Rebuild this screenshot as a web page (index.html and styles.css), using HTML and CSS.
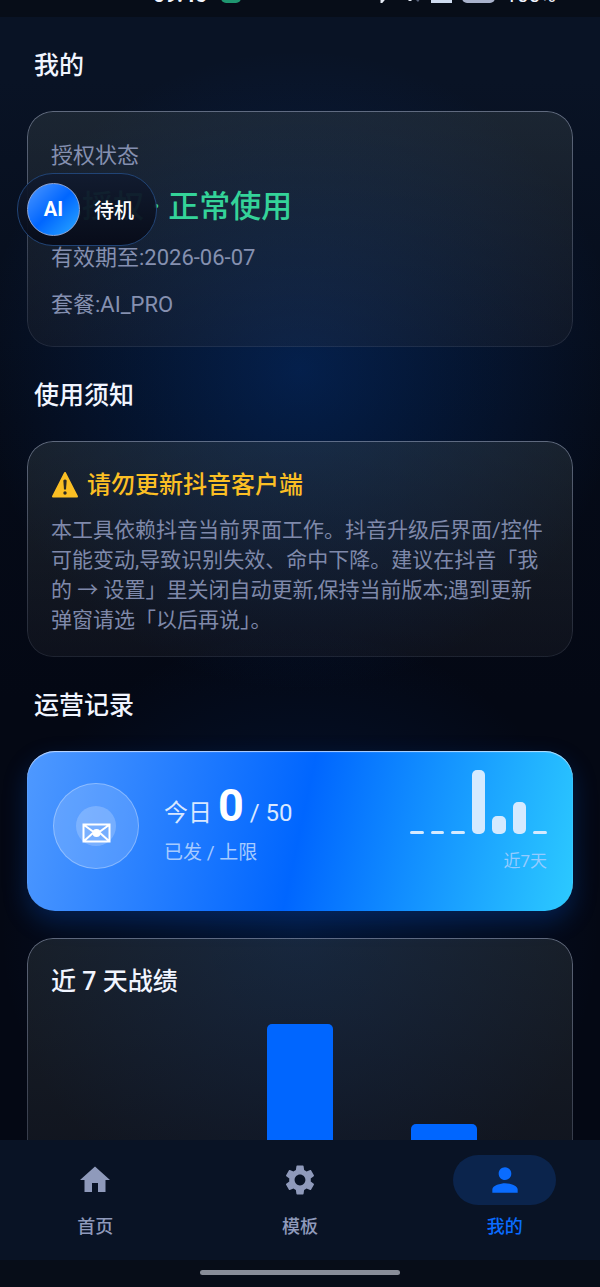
FILE: index.html
```html
<!DOCTYPE html>
<html lang="zh-CN">
<head>
  <meta charset="UTF-8" />
  <meta name="viewport" content="width=device-width, initial-scale=1.0"/>
  <title>我的</title>
  <link rel="stylesheet" href="styles.css">
</head>
<body>
  <div class="status-bar">
    <span class="clock">09:46</span>
    <span class="app-dot"></span>
    <span class="status-icons">
      <svg width="66" height="22" viewBox="0 0 66 22">
        <path d="M27 2v18l7-8-7-5M55 2v18" fill="none" stroke="#e6ebf5" stroke-width="3"/>
        <path d="M59 17h7l-3 4z" fill="#59627a"/>
      </svg>
      <span class="sim"></span>
      <span class="battery"></span>
      <span class="percent">100%</span>
    </span>
  </div>

  <main class="content">
    <h1 class="section-title">我的</h1>
    <section class="card license">
      <p>授权状态</p>
      <p class="license-state">已授权 · 正常使用</p>
      <p>有效期至:2026-06-07</p>
      <p>套餐:AI_PRO</p>
      <button class="float-ball" type="button">
        <span class="ball">AI</span>
        <span>待机</span>
      </button>
    </section>

    <h2 class="section-title">使用须知</h2>
    <section class="card notice">
      <h3 class="notice-title">
        <svg width="28" height="28" viewBox="0 0 28 28">
          <path d="M14 2 26 25.500H2z" fill="#fbbf24" stroke="#fbbf24" stroke-width="2" stroke-linejoin="round"/>
          <path d="M12.300 9.500q1.700-2 3.400 0l-.7 9h-2z" fill="#2b2a26"/>
          <circle cx="14" cy="22" r="1.700" fill="#2b2a26"/>
        </svg>
        请勿更新抖音客户端
      </h3>
      <p class="notice-text">本工具依赖抖音当前界面工作。抖音升级后界面/控件可能变动,导致识别失效、命中下降。建议在抖音「我的 → 设置」里关闭自动更新,保持当前版本;遇到更新弹窗请选「以后再说」。</p>
    </section>

    <h2 class="section-title">运营记录</h2>
    <section class="today">
      <div class="mail">
        <svg width="84" height="84" viewBox="0 0 84 84">
          <circle cx="42" cy="42" r="20" fill="#fff" fill-opacity=".2"/>
          <path d="M29.500 40.500h26v17h-26zM30 41l12.500 9L55 41M30 57l9-8M55 57l-9-8" fill="none" stroke="#fff" stroke-width="2"/>
          <circle cx="42.500" cy="49" r="4" fill="#fff"/>
        </svg>
      </div>
      <div class="today-info">
        <p class="today-count">今日 <strong>0</strong> / 50</p>
        <p class="today-label">已发 / 上限</p>
      </div>
      <div class="trend">
        <div class="trend-bars" id="trendBars"></div>
        <p>近7天</p>
      </div>
    </section>

    <section class="card week">
      <h3 class="week-title">近 7 天战绩</h3>
      <div class="week-bars" id="weekBars"></div>
    </section>
  </main>

  <nav class="tab-bar">
    <a class="tab" href="#home">
      <span class="tab-icon"><svg width="36" height="36" viewBox="0 0 24 24"><path d="M10 20v-6h4v6h5v-8h3L12 3 2 12h3v8z"/></svg></span>
      首页
    </a>
    <a class="tab" href="#template">
      <span class="tab-icon"><svg width="36" height="36" viewBox="0 0 24 24"><path d="M19.140 12.940c.04-.3.060-.61.060-.94 0-.32-.02-.64-.07-.94l2.030-1.580c.18-.14.230-.41.120-.61l-1.920-3.320c-.12-.22-.37-.29-.59-.22l-2.390.96c-.5-.38-1.030-.7-1.620-.94l-.36-2.540c-.04-.24-.24-.41-.48-.41h-3.840c-.24 0-.43.17-.47.41l-.36 2.540c-.59.24-1.130.57-1.620.94l-2.390-.96c-.22-.08-.47 0-.59.22L2.740 8.870c-.12.21-.08.470.12.610l2.030 1.580c-.05.3-.09.630-.09.940s.02.640.07.940l-2.030 1.580c-.18.14-.23.410-.12.610l1.920 3.320c.12.220.37.290.59.220l2.390-.96c.5.380 1.030.7 1.620.94l.36 2.540c.05.240.240.410.480.410h3.840c.24 0 .44-.17.470-.41l.36-2.540c.59-.24 1.130-.56 1.620-.94l2.390.96c.22.080.47 0 .59-.22l1.920-3.320c.12-.22.070-.47-.12-.61zM12 15.600c-1.980 0-3.600-1.620-3.600-3.600s1.620-3.600 3.600-3.600 3.600 1.620 3.600 3.600-1.620 3.600-3.600 3.600z"/></svg></span>
      模板
    </a>
    <a class="tab active" href="#mine">
      <span class="tab-icon"><svg width="38" height="38" viewBox="0 0 24 24"><path d="M12 12c2.210 0 4-1.790 4-4s-1.790-4-4-4-4 1.790-4 4 1.790 4 4 4zm0 2c-2.670 0-8 1.340-8 4v2h16v-2c0-2.660-5.330-4-8-4z"/></svg></span>
      我的
    </a>
  </nav>
  <div class="gesture-bar"><span></span></div>

  <script>
    // share of the best day, oldest first
    const days = [0, 0, 0, 100, 28, 50, 0];

    function drawBars(id) {
      const box = document.getElementById(id);
      days.forEach(value => {
        const bar = document.createElement('span');
        bar.style.height = value + '%';
        box.appendChild(bar);
      });
    }

    drawBars('trendBars');
    drawBars('weekBars');
  </script>
</body>
</html>
```
FILE: styles.css
```css
* {
  box-sizing: border-box;
}
body {
  margin: 0;
  height: 100vh;
  display: flex;
  flex-direction: column;
  overflow: hidden;
  font-family: Roboto, "Noto Sans CJK SC", sans-serif;
  color: #f1f5ff;
  background:
    radial-gradient(circle 320px at 50% 370px, rgba(0, 82, 204, 0.28), rgba(0, 82, 204, 0.12) 55%, transparent),
    radial-gradient(circle 300px at 50% 930px, rgba(0, 82, 204, 0.18), transparent),
    linear-gradient(#091325 80px, #050b18 420px, #040814 700px, #040814);
}
h1, h2, h3, p {
  margin: 0;
  font-weight: 500;
}
.status-bar {
  flex: none;
  height: 17px;
  display: flex;
  align-items: flex-end;
  padding: 0 44px 14px 153px;
  overflow: hidden;
  background: #070d18;
  font-size: 21px;
  line-height: 16px;
}
.clock {
  font-weight: 700;
}
.app-dot {
  width: 20px;
  height: 20px;
  margin-left: 14px;
  border-radius: 5px;
  background: #1f9670;
}
.status-icons {
  display: flex;
  align-items: flex-end;
  gap: 10px;
  margin-left: auto;
}
.sim {
  width: 21px;
  height: 20px;
  background: #cfdcf0;
}
.battery {
  width: 33px;
  height: 20px;
  border-radius: 5px;
  background: #a9b2cc;
}
.content {
  flex: 1;
  min-height: 0;
  overflow: hidden;
  padding: 0 27px;
}
.section-title {
  margin: 33px 7px 29px;
  font-size: 25px;
  line-height: 32px;
}
.card {
  position: relative;
  padding: 28px 24px 27px;
  border-radius: 26px;
  background: linear-gradient(rgba(70, 82, 84, 0.3), rgba(52, 52, 58, 0.2));
}
.card::before {
  content: "";
  position: absolute;
  inset: 0;
  padding: 1px;
  border-radius: 26px;
  background: linear-gradient(rgba(200, 210, 240, 0.4), rgba(180, 195, 230, 0.1));
  mask: linear-gradient(#000 0 0) content-box exclude, linear-gradient(#000 0 0);
  pointer-events: none;
}
.license {
  display: grid;
  gap: 15px;
  padding: 29px 24px 26px;
  font-size: 22px;
  line-height: 32px;
  color: #8590b0;
}
.license p {
  font-weight: 400;
}
.license .license-state {
  font-size: 31px;
  line-height: 40px;
  font-weight: 500;
  color: #34d399;
}
.float-ball {
  position: absolute;
  left: -10px;
  top: 62px;
  display: flex;
  align-items: center;
  gap: 14px;
  padding: 9px 22px 9px 9px;
  border: 1px solid #214476;
  border-radius: 36px;
  background: linear-gradient(rgba(17, 27, 47, 0.95), rgba(7, 11, 24, 0.95));
  color: #fff;
  font-family: inherit;
  font-size: 20px;
  font-weight: 500;
}
.ball {
  width: 53px;
  height: 53px;
  border: 1px solid #8fa6d8;
  border-radius: 50%;
  background: linear-gradient(135deg, #4d97ff, #0066ff 50%, #2aa9ff);
  font-weight: 700;
  line-height: 51px;
  text-align: center;
}
.notice {
  padding-bottom: 22px;
}
.notice-title {
  display: flex;
  align-items: center;
  gap: 8px;
  font-size: 24px;
  line-height: 32px;
  color: #fbbf24;
}
.notice-text {
  margin-top: 14px;
  font-size: 21px;
  line-height: 30px;
  font-weight: 400;
  color: #7f89aa;
}
.today {
  display: flex;
  align-items: center;
  min-height: 160px;
  padding: 19px 26px 29px;
  border-radius: 28px;
  background: linear-gradient(102deg, #4f99ff, #0066ff 50%, #2ccaff);
  box-shadow: 0 10px 24px rgba(0, 92, 230, 0.26), inset 0 1px 1px rgba(225, 235, 255, 0.8);
}
.mail {
  width: 86px;
  height: 86px;
  border: 1px solid rgba(255, 255, 255, 0.3);
  border-radius: 50%;
  background: rgba(255, 255, 255, 0.16);
}
.today-info {
  margin-left: 25px;
}
.today-count {
  font-size: 24px;
  line-height: 36px;
  font-weight: 400;
  color: #d9e8ff;
}
.today-count strong {
  font-size: 45px;
  color: #fff;
}
.today-label {
  margin-top: 10px;
  font-size: 19px;
  line-height: 24px;
  font-weight: 400;
  color: #a6cbff;
}
.trend {
  align-self: flex-start;
  width: 137px;
  margin-left: auto;
  text-align: right;
}
.trend-bars {
  display: flex;
  align-items: flex-end;
  gap: 7px;
  height: 64px;
}
.trend-bars span {
  flex: 1;
  min-height: 3px;
  border-radius: 5px;
  background: #d5eaff;
}
.trend p {
  margin-top: 15px;
  font-size: 17px;
  line-height: 24px;
  font-weight: 400;
  color: #95cbff;
}
.week {
  margin-top: 27px;
}
.week-title {
  font-size: 25px;
  line-height: 32px;
}
.week-bars {
  display: flex;
  align-items: flex-end;
  gap: 6px;
  height: 200px;
  margin-top: 26px;
}
.week-bars span {
  flex: 1;
  border-radius: 5px;
  background: #0066ff;
}
.tab-bar {
  flex: none;
  display: flex;
  gap: 14px;
  padding: 15px 0 20px;
  background: #091325;
}
.tab {
  flex: 1;
  display: flex;
  flex-direction: column;
  align-items: center;
  gap: 8px;
  font-size: 18px;
  line-height: 27px;
  font-weight: 500;
  color: #8f9abb;
  text-decoration: none;
}
.tab-icon {
  display: flex;
  align-items: center;
  justify-content: center;
  width: 103px;
  height: 50px;
  border-radius: 25px;
}
.tab-icon svg {
  fill: currentColor;
}
.tab.active {
  color: #0a6cff;
}
.tab.active .tab-icon {
  background: #0b244c;
}
.gesture-bar {
  flex: none;
  height: 27px;
  padding-top: 10px;
  background: #070d18;
}
.gesture-bar span {
  display: block;
  width: 200px;
  height: 5px;
  margin: 0 auto;
  border-radius: 3px;
  background: #888d98;
}
```
